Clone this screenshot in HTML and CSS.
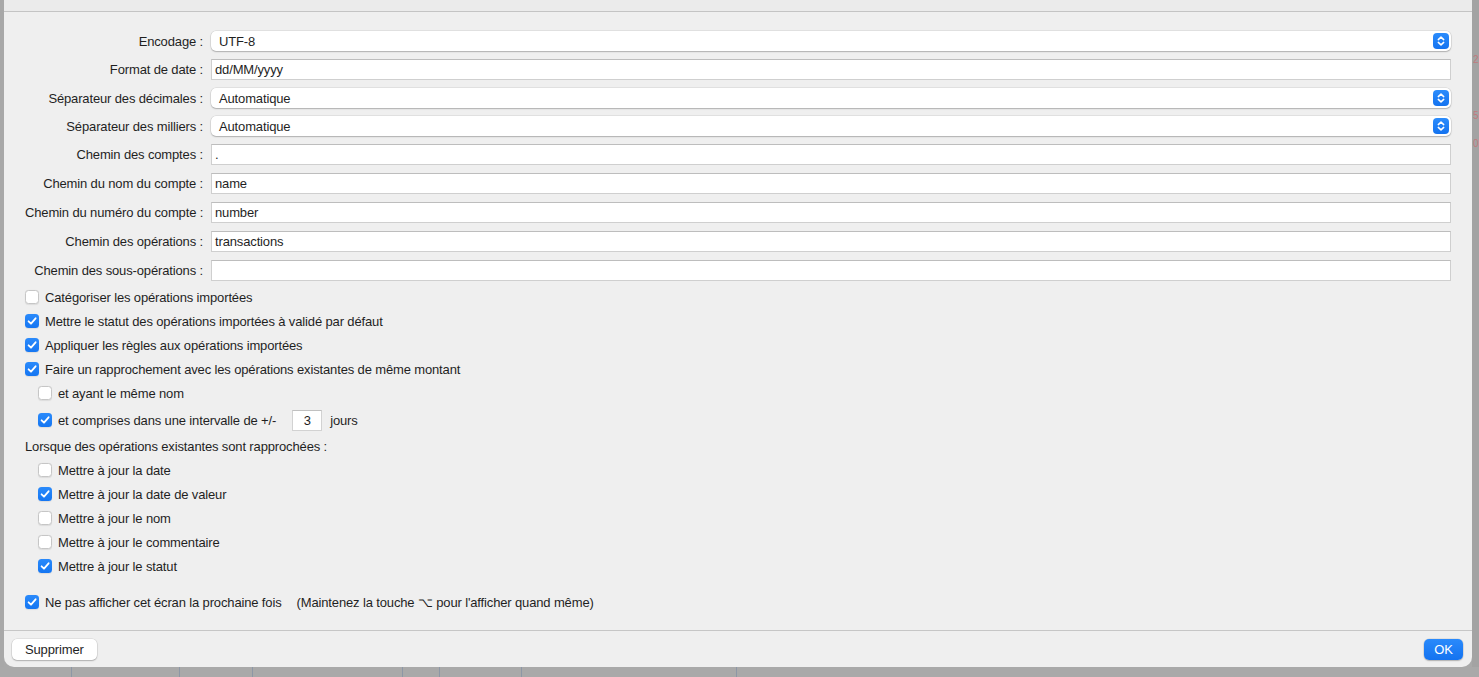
FILE: index.html
```html
<!DOCTYPE html>
<html lang="fr">
<head>
<meta charset="utf-8">
<title>Import</title>
<link rel="stylesheet" href="styles.css">
</head>
<body>
<div class="screen">
  <div class="side side-left"></div>
  <div class="sheet">
    <div class="sheet-top"></div>
    <div class="content">
      <div class="form">
        <label class="lbl">Encodage :</label>
        <div class="popup"><span>UTF-8</span><span class="stepper"><svg width="16" height="16" viewBox="0 0 16 16"><path d="M5.3 6.6 L8 4.1 L10.7 6.6 M5.3 9.4 L8 11.9 L10.7 9.4" fill="none" stroke="#fff" stroke-width="1.5" stroke-linecap="round" stroke-linejoin="round"/></svg></span></div>

        <label class="lbl">Format de date :</label>
        <div class="field">dd/MM/yyyy</div>

        <label class="lbl">Séparateur des décimales :</label>
        <div class="popup"><span>Automatique</span><span class="stepper"><svg width="16" height="16" viewBox="0 0 16 16"><path d="M5.3 6.6 L8 4.1 L10.7 6.6 M5.3 9.4 L8 11.9 L10.7 9.4" fill="none" stroke="#fff" stroke-width="1.5" stroke-linecap="round" stroke-linejoin="round"/></svg></span></div>

        <label class="lbl">Séparateur des milliers :</label>
        <div class="popup"><span>Automatique</span><span class="stepper"><svg width="16" height="16" viewBox="0 0 16 16"><path d="M5.3 6.6 L8 4.1 L10.7 6.6 M5.3 9.4 L8 11.9 L10.7 9.4" fill="none" stroke="#fff" stroke-width="1.5" stroke-linecap="round" stroke-linejoin="round"/></svg></span></div>

        <label class="lbl">Chemin des comptes :</label>
        <div class="field">.</div>

        <label class="lbl">Chemin du nom du compte :</label>
        <div class="field">name</div>

        <label class="lbl">Chemin du numéro du compte :</label>
        <div class="field">number</div>

        <label class="lbl">Chemin des opérations :</label>
        <div class="field">transactions</div>

        <label class="lbl">Chemin des sous-opérations :</label>
        <div class="field"></div>
      </div>

      <div class="checks">
        <div class="row"><span class="cb"></span><span>Catégoriser les opérations importées</span></div>
        <div class="row"><span class="cb on"><svg width="14" height="14" viewBox="0 0 14 14"><path d="M3.6 7.3 L6 9.7 L10.6 4.3" fill="none" stroke="#fff" stroke-width="1.8" stroke-linecap="round" stroke-linejoin="round"/></svg></span><span>Mettre le statut des opérations importées à validé par défaut</span></div>
        <div class="row"><span class="cb on"><svg width="14" height="14" viewBox="0 0 14 14"><path d="M3.6 7.3 L6 9.7 L10.6 4.3" fill="none" stroke="#fff" stroke-width="1.8" stroke-linecap="round" stroke-linejoin="round"/></svg></span><span>Appliquer les règles aux opérations importées</span></div>
        <div class="row"><span class="cb on"><svg width="14" height="14" viewBox="0 0 14 14"><path d="M3.6 7.3 L6 9.7 L10.6 4.3" fill="none" stroke="#fff" stroke-width="1.8" stroke-linecap="round" stroke-linejoin="round"/></svg></span><span>Faire un rapprochement avec les opérations existantes de même montant</span></div>
        <div class="row indent"><span class="cb"></span><span>et ayant le même nom</span></div>
        <div class="row indent tall"><span class="cb on"><svg width="14" height="14" viewBox="0 0 14 14"><path d="M3.6 7.3 L6 9.7 L10.6 4.3" fill="none" stroke="#fff" stroke-width="1.8" stroke-linecap="round" stroke-linejoin="round"/></svg></span><span>et comprises dans une intervalle de +/-</span><span class="num">3</span><span class="unit">jours</span></div>
        <div class="heading">Lorsque des opérations existantes sont rapprochées :</div>
        <div class="row indent"><span class="cb"></span><span>Mettre à jour la date</span></div>
        <div class="row indent"><span class="cb on"><svg width="14" height="14" viewBox="0 0 14 14"><path d="M3.6 7.3 L6 9.7 L10.6 4.3" fill="none" stroke="#fff" stroke-width="1.8" stroke-linecap="round" stroke-linejoin="round"/></svg></span><span>Mettre à jour la date de valeur</span></div>
        <div class="row indent"><span class="cb"></span><span>Mettre à jour le nom</span></div>
        <div class="row indent"><span class="cb"></span><span>Mettre à jour le commentaire</span></div>
        <div class="row indent"><span class="cb on"><svg width="14" height="14" viewBox="0 0 14 14"><path d="M3.6 7.3 L6 9.7 L10.6 4.3" fill="none" stroke="#fff" stroke-width="1.8" stroke-linecap="round" stroke-linejoin="round"/></svg></span><span>Mettre à jour le statut</span></div>
        <div class="row last"><span class="cb on"><svg width="14" height="14" viewBox="0 0 14 14"><path d="M3.6 7.3 L6 9.7 L10.6 4.3" fill="none" stroke="#fff" stroke-width="1.8" stroke-linecap="round" stroke-linejoin="round"/></svg></span><span>Ne pas afficher cet écran la prochaine fois</span><span class="hint">(Maintenez la touche ⌥ pour l'afficher quand même)</span></div>
      </div>
    </div>
    <div class="footer">
      <button class="btn">Supprimer</button>
      <button class="btn primary">OK</button>
    </div>
  </div>
  <div class="side side-right">
    <span class="frag f1">2</span>
    <span class="frag f2">5</span>
    <span class="frag f3">0</span>
  </div>
</div>
<div class="under">
  <span class="cell w72"></span>
  <span class="cell w108"></span>
  <span class="cell w73"></span>
  <span class="cell w150"></span>
  <span class="cell w37"></span>
  <span class="cell w82"></span>
  <span class="cell w215"></span>
</div>
</body>
</html>
```

FILE: styles.css
```css
* { box-sizing: border-box; }

html, body {
  margin: 0;
  padding: 0;
}

body {
  width: 1479px;
  height: 677px;
  overflow: hidden;
  background: #a9a9a9;
  font-family: "Liberation Sans", Arial, sans-serif;
  font-size: 13px;
  letter-spacing: -0.14px;
  color: #1f1f1f;
}

.screen {
  display: flex;
  height: 667px;
}

.side-left {
  width: 4px;
  background: #a8a8a8;
}

.side-right {
  width: 7px;
  background: #a3a3a3;
  display: flex;
  flex-direction: column;
  overflow: hidden;
  color: #c07a7d;
  font-size: 10px;
  line-height: 12px;
}

.frag { display: block; padding-left: 1px; }
.f1 { margin-top: 54px; }
.f2 { margin-top: 44px; }
.f3 { margin-top: 16px; }

.sheet {
  width: 1468px;
  background: #efefef;
  border-radius: 0 0 10px 10px;
  display: flex;
  flex-direction: column;
  overflow: hidden;
}

.sheet-top {
  height: 12px;
  background: #ebebeb;
  border-bottom: 1px solid #c4c4c4;
}

.content {
  padding: 19px 21px 0 21px;
  flex: 1;
}

.form {
  display: grid;
  grid-template-columns: 178px 1fr;
  column-gap: 8px;
  row-gap: 8px;
  align-items: center;
}

.lbl {
  text-align: right;
  white-space: nowrap;
  line-height: 16px;
  padding-top: 1px;
}

.popup {
  height: 20px;
  background: #fff;
  border-radius: 5px;
  box-shadow: 0 0 0 0.5px rgba(0,0,0,0.12), 0 1px 1.5px rgba(0,0,0,0.22);
  display: flex;
  align-items: center;
  justify-content: space-between;
  padding: 0 2px 0 8px;
  line-height: 16px;
}

.popup > span:first-child { padding-top: 1px; }

.stepper {
  width: 16px;
  height: 16px;
  border-radius: 4px;
  background: linear-gradient(#2b8cfc, #1473f0);
  display: flex;
}

.field {
  height: 21px;
  background: #fff;
  border: 1px solid #cfcfcf;
  border-top-color: #bdbdbd;
  padding: 1px 4px 0 3px;
  line-height: 18px;
}

.checks {
  margin-top: 4px;
  display: flex;
  flex-direction: column;
}

.row {
  height: 24px;
  display: flex;
  align-items: center;
  white-space: nowrap;
}

.row.indent { padding-left: 13px; }
.row.tall { height: 30px; }
.row.last { margin-top: 12px; }

.cb {
  width: 14px;
  height: 14px;
  border-radius: 3.5px;
  background: #fff;
  border: 1px solid #c6c6c6;
  box-shadow: 0 0.5px 1px rgba(0,0,0,0.08);
  margin-right: 6px;
  flex: none;
  display: flex;
}

.cb.on {
  background: linear-gradient(#2a8afb, #1576f2);
  border: none;
}

.num {
  width: 30px;
  height: 21px;
  background: #fff;
  border: 1px solid #d2d2d2;
  border-top-color: #c0c0c0;
  margin-left: 16px;
  text-align: center;
  line-height: 19px;
}

.unit { margin-left: 8px; }

.heading {
  height: 23px;
  display: flex;
  align-items: center;
}

.hint { margin-left: 15px; }

.footer {
  height: 37px;
  border-top: 1px solid #c6c6c6;
  display: flex;
  align-items: center;
  justify-content: space-between;
  padding: 0 8px 0 8px;
}

.btn {
  font-family: inherit;
  font-size: 13px;
  letter-spacing: -0.14px;
  color: #1f1f1f;
  height: 21px;
  padding: 0 13px;
  border: none;
  border-radius: 5px;
  background: #fff;
  box-shadow: 0 0 0 0.5px rgba(0,0,0,0.12), 0 1px 1.5px rgba(0,0,0,0.22);
  line-height: 21px;
  margin-top: 1px;
}

.btn.primary {
  width: 39px;
  padding: 0;
  color: #fff;
  background: linear-gradient(#2a8afb, #1473f0);
  margin-right: 1px;
}

.under {
  height: 10px;
  display: flex;
  background: #a9a9a9;
}

.cell {
  height: 10px;
  border-right: 1px solid #8d97a6;
}

.w72 { width: 72px; }
.w108 { width: 108px; }
.w73 { width: 73px; }
.w150 { width: 150px; }
.w37 { width: 37px; }
.w82 { width: 82px; }
.w215 { width: 215px; }
```
